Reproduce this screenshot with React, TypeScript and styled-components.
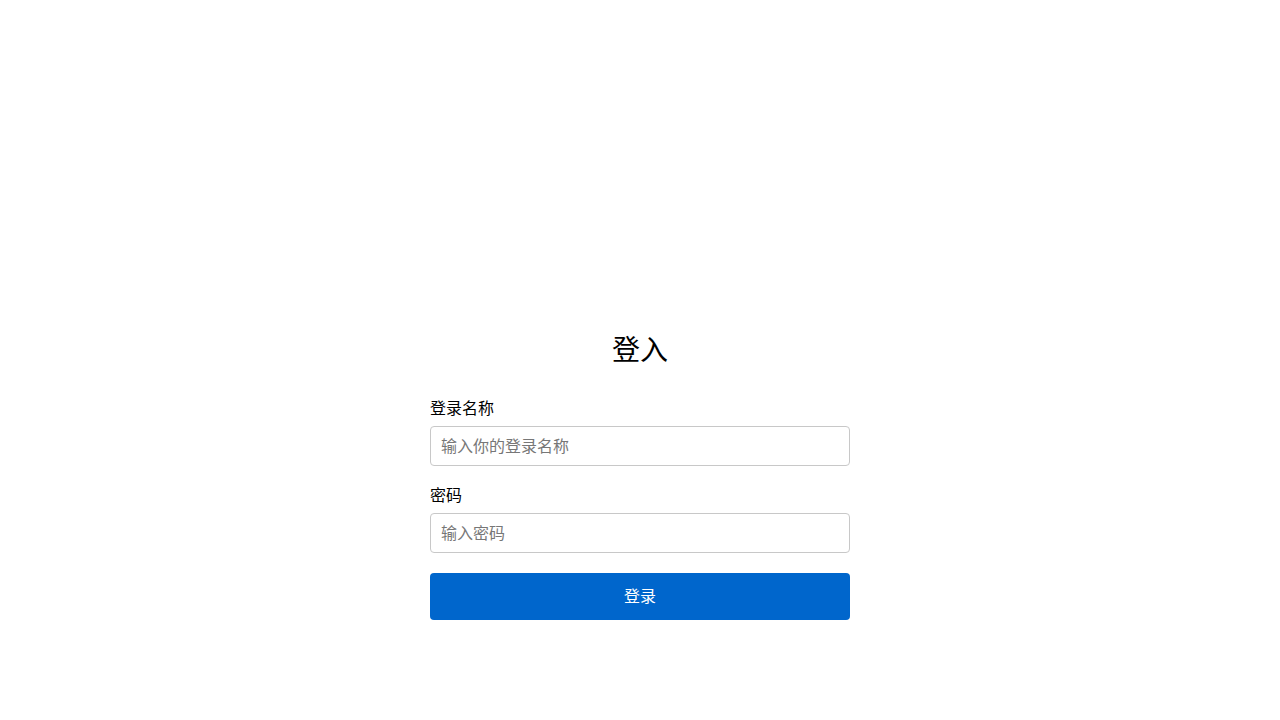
import React from "react";
import styled, { createGlobalStyle } from "styled-components";

const GlobalStyle = createGlobalStyle`
  html, body {
    margin: 0;
    padding: 0;
    background: #ffffff;
  }
  body {
    font-family: "Noto Sans CJK SC", "Noto Sans", "Liberation Sans", sans-serif;
    color: #000;
  }
  * { box-sizing: border-box; }
`;

const Page = styled.div`
  display: flex;
  justify-content: center;
  padding-top: 328px;
`;

const Form = styled.form`
  width: 420px;
  display: flex;
  flex-direction: column;
`;

const Title = styled.h1`
  margin: 0 0 29px;
  font-size: 28px;
  line-height: 40px;
  font-weight: 400;
  text-align: center;
`;

const Field = styled.div`
  display: flex;
  flex-direction: column;
  margin-bottom: 18px;
`;

const Label = styled.label`
  font-size: 16px;
  line-height: 20px;
  margin-bottom: 9px;
`;

const Input = styled.input`
  height: 40px;
  width: 100%;
  border: 1px solid #c8c8c8;
  border-radius: 4px;
  padding: 0 10px 3px;
  font-size: 16px;
  font-family: inherit;
  color: #333;
  outline: none;
  &::placeholder {
    color: #777;
  }
`;

const Button = styled.button`
  margin-top: 2px;
  height: 47px;
  width: 100%;
  border: none;
  border-radius: 4px;
  background: #0066cc;
  color: #fff;
  font-size: 16px;
  font-family: inherit;
  padding: 0 0 4px;
  cursor: pointer;
`;

export default function App() {
  return (
    <>
      <GlobalStyle />
      <Page>
        <Form onSubmit={(e) => e.preventDefault()}>
          <Title>登入</Title>
          <Field>
            <Label htmlFor="username">登录名称</Label>
            <Input id="username" type="text" placeholder="输入你的登录名称" />
          </Field>
          <Field>
            <Label htmlFor="password">密码</Label>
            <Input id="password" type="password" placeholder="输入密码" />
          </Field>
          <Button type="submit">登录</Button>
        </Form>
      </Page>
    </>
  );
}
